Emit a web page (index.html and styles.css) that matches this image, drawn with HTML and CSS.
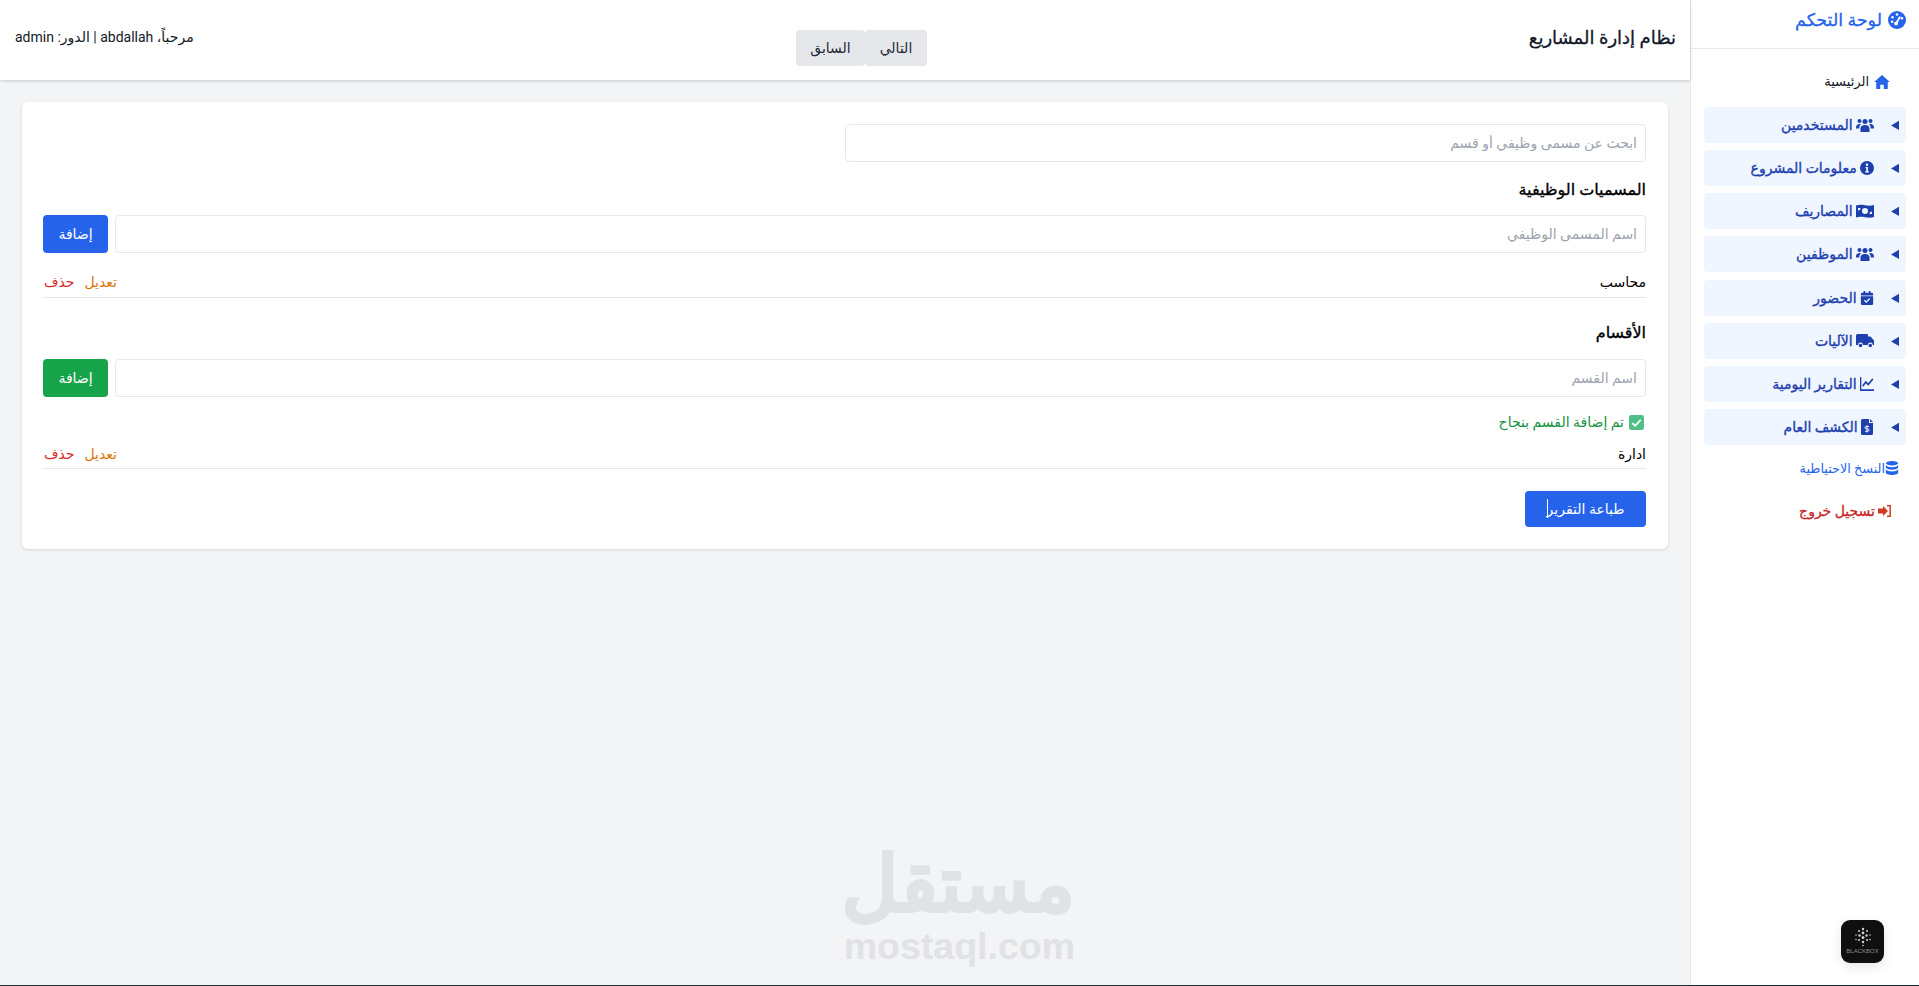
FILE: index.html
```html
<!DOCTYPE html>
<html lang="ar" dir="rtl">

<head>
  <meta charset="UTF-8" />
  <title>نظام إدارة المشاريع</title>
  <link rel="stylesheet" href="styles.css">
</head>

<body>
  <aside class="sidebar">
    <div class="sidebar-title">
      <svg class="title-icon" viewBox="0 0 20 20"><circle cx="10" cy="10" r="10" fill="#2563eb"/><circle cx="10" cy="4" r="1.4" fill="#fff"/><circle cx="5" cy="7" r="1.4" fill="#fff"/><circle cx="4.5" cy="12" r="1.4" fill="#fff"/><circle cx="15.5" cy="8" r="1.4" fill="#fff"/><path d="M9 14l4-7" stroke="#fff" stroke-width="2" stroke-linecap="round"/><circle cx="9" cy="14" r="2.2" fill="#fff"/></svg>
      <span>لوحة التحكم</span>
    </div>
    <nav class="nav">
      <a class="nav-home">
        <svg class="icon" viewBox="0 0 18 16"><path fill="#2563eb" d="M9 0l9 8h-2.4v8H11v-5H7v5H2.400V8H0z"/></svg>
        <span>الرئيسية</span>
      </a>
      <details class="nav-group"><summary><svg class="icon" viewBox="0 0 18 14"><g fill="#1e40af"><circle cx="9" cy="3.500" r="2.500"/><circle cx="3.500" cy="3" r="2"/><circle cx="14.500" cy="3" r="2"/><path d="M4.500 14v-3.500C4.500 8 6.500 7 9 7s4.500 1 4.500 3.500V14z"/><path d="M0 10c0-3 1.500-4 3.500-4 .6 0 1 .1 1.400.3C3.800 7.200 3.300 8.500 3.300 10.500H0zM18 10c0-3-1.500-4-3.500-4-.6 0-1 .1-1.400.3 1.100.9 1.600 2.200 1.600 4.200H18z"/></g></svg> المستخدمين</summary></details>
      <details class="nav-group"><summary><svg class="icon icon-14" viewBox="0 0 14 14"><circle cx="7" cy="7" r="7" fill="#1e40af"/><circle cx="7" cy="3.800" r="1.200" fill="#fff"/><path d="M5.600 6h2.300v4.200h1v1.200H5.200v-1.200h1.100V7.200H5.600z" fill="#fff"/></svg> معلومات المشروع</summary></details>
      <details class="nav-group"><summary><svg class="icon" viewBox="0 0 18 14"><path fill="#1e40af" fill-rule="evenodd" d="M0 1.500c6-2 12 1.500 18-.5v12c-6 2-12-1.500-18 .5zM9 4a3 3 0 100 6 3 3 0 000-6zM2 4v2.500A2.500 2.500 0 004.500 4zM16 10V7.500A2.500 2.500 0 0013.500 10z"/></svg> المصاريف</summary></details>
      <details class="nav-group"><summary><svg class="icon" viewBox="0 0 18 14"><g fill="#1e40af"><circle cx="9" cy="3.500" r="2.500"/><circle cx="3.500" cy="3" r="2"/><circle cx="14.500" cy="3" r="2"/><path d="M4.500 14v-3.500C4.500 8 6.500 7 9 7s4.500 1 4.500 3.500V14z"/><path d="M0 10c0-3 1.500-4 3.500-4 .6 0 1 .1 1.400.3C3.800 7.200 3.300 8.500 3.300 10.500H0zM18 10c0-3-1.500-4-3.500-4-.6 0-1 .1-1.400.3 1.100.9 1.600 2.200 1.600 4.200H18z"/></g></svg> الموظفين</summary></details>
      <details class="nav-group"><summary><svg class="icon icon-14" viewBox="0 0 14 16"><path fill="#1e40af" fill-rule="evenodd" d="M3 0h2v2h4V0h2v2h1.500A1.500 1.500 0 0114 3.500V5H0V3.500A1.500 1.500 0 011.500 2H3zM0 6h14v8.500a1.500 1.500 0 01-1.500 1.500h-11A1.500 1.500 0 010 14.500z"/><path d="M4 10.500l2.200 2.200L10 8.500" fill="none" stroke="#eff6ff" stroke-width="1.500"/></svg> الحضور</summary></details>
      <details class="nav-group"><summary><svg class="icon" viewBox="0 0 18 14"><path fill="#1e40af" d="M1.500 0H11a1 1 0 011 1v1.500h2.500L18 6.500V11h-1.200a2.500 2.500 0 00-5 0H7a2.500 2.500 0 00-5 0H0V1.500A1.500 1.500 0 011.500 0z"/><circle cx="4.500" cy="11.500" r="1.800" fill="#1e40af"/><circle cx="14.300" cy="11.500" r="1.800" fill="#1e40af"/></svg> الآليات</summary></details>
      <details class="nav-group"><summary><svg class="icon icon-14" viewBox="0 0 18 14" preserveAspectRatio="none"><path fill="none" stroke="#1e40af" stroke-width="1.800" d="M.8 0v13.200H18"/><path fill="none" stroke="#1e40af" stroke-width="1.800" d="M3.500 9l4-4 3 2.500L16.500 2"/></svg> التقارير اليومية</summary></details>
      <details class="nav-group"><summary><svg class="icon icon-12" viewBox="0 0 12 16"><path fill="#1e40af" d="M1.500 0H8v4h4v10.500a1.500 1.500 0 01-1.500 1.500h-9A1.500 1.500 0 010 14.500v-13A1.500 1.500 0 011.500 0zM9 0l3 3H9z"/><path d="M8 7.500H5.200a1.200 1.200 0 000 2.400h1.600a1.200 1.200 0 010 2.400H4M6 6.300v7.200" fill="none" stroke="#eff6ff"/></svg> الكشف العام</summary></details>
      <a class="nav-backup">
        <svg class="icon" viewBox="0 0 14 16"><g fill="#2563eb"><ellipse cx="7" cy="2.500" rx="7" ry="2.500"/><path d="M0 4.500C1 6.200 4 7 7 7s6-.8 7-2.500v3C13 9.200 10 10 7 10S1 9.200 0 7.500zM0 9.500C1 11.200 4 12 7 12s6-.8 7-2.500v4C14 15 10.500 16 7 16s-7-1-7-2.500z"/></g></svg>
        <span>النسخ الاحتياطية</span>
      </a>
      <a class="nav-logout">
        <svg class="icon" viewBox="0 0 14 12"><path fill="#d03b20" d="M1 3.500h5V1l5 5-5 5V8.500H1z"/><path fill="none" stroke="#d03b20" stroke-width="1.500" d="M10 .8h3.200v10.400H10"/></svg>
        <span>تسجيل خروج</span>
      </a>
    </nav>
  </aside>

  <div class="main">
    <header class="topbar">
      <h1 class="page-title">نظام إدارة المشاريع</h1>
      <div class="pager">
        <button class="pager-btn">التالي</button>
        <button class="pager-btn">السابق</button>
      </div>
      <div class="welcome">مرحباً، abdallah | الدور: admin</div>
    </header>

    <main class="content">
      <section class="card">
        <input class="field search" type="text" placeholder="ابحث عن مسمى وظيفي أو قسم" />

        <h2 class="section-title section-first">المسميات الوظيفية</h2>
        <div class="add-row">
          <input class="field" type="text" placeholder="اسم المسمى الوظيفي" />
          <button class="btn btn-blue">إضافة</button>
        </div>
        <div class="list-row">
          <span>محاسب</span>
          <span class="actions"><a class="edit">تعديل</a><a class="delete">حذف</a></span>
        </div>

        <h2 class="section-title section-second">الأقسام</h2>
        <div class="add-row">
          <input class="field" type="text" placeholder="اسم القسم" />
          <button class="btn btn-green">إضافة</button>
        </div>
        <div class="success">
          <svg class="check" viewBox="0 0 14 14"><rect width="14" height="14" rx="2" fill="#4fbf85"/><path d="M3 7.500l2.800 2.500L11 4.500" fill="none" stroke="#fff" stroke-width="1.600"/></svg>
          تم إضافة القسم بنجاح
        </div>
        <div class="list-row list-row-tight">
          <span>ادارة</span>
          <span class="actions"><a class="edit">تعديل</a><a class="delete">حذف</a></span>
        </div>

        <button class="btn btn-print">طباعة التقرير<span class="ibeam"></span></button>
      </section>
    </main>
  </div>

  <!-- watermark and badge sit on top of the page -->
  <div class="watermark">
    <div class="wm-ar">مستقل</div>
    <div class="wm-en">mostaql.com</div>
  </div>
  <div class="blackbox">
    <svg class="bb-dots" viewBox="0 0 20 20"><g fill="#c9d3c6"><circle cx="10" cy="2" r="1.200"/><circle cx="6" cy="4" r="1"/><circle cx="14" cy="4" r="1"/><circle cx="10" cy="6" r="1.400"/><circle cx="3" cy="8" r=".8"/><circle cx="6.500" cy="8.500" r="1.200"/><circle cx="13.500" cy="8.500" r="1.200"/><circle cx="17" cy="8" r=".8"/><circle cx="10" cy="10.500" r="1.500"/><circle cx="6" cy="13" r="1"/><circle cx="14" cy="13" r="1"/><circle cx="3" cy="12.500" r=".8"/><circle cx="17" cy="12.500" r=".8"/><circle cx="10" cy="15" r="1.200"/><circle cx="10" cy="18.500" r=".8"/></g></svg>
    <span class="bb-name">BLACKBOX</span>
  </div>
</body>

</html>
```

FILE: styles.css
```css
* {
  box-sizing: border-box;
}

html,
body {
  height: 100%;
}

body {
  margin: 0;
  height: 986px;
  display: flex;
  overflow: hidden;
  background-color: #f3f4f6;
  color: #111827;
  font-family: 'Roboto', 'Noto Sans', 'DejaVu Sans', sans-serif;
  font-size: 14px;
  border-bottom: 1px solid #1f2937;
}

/* sidebar */
.sidebar {
  width: 229px;
  flex-shrink: 0;
  background-color: #fff;
  border-left: 1px solid #e5e7eb;
}

.sidebar-title {
  height: 49px;
  padding: 0 13px 8px;
  display: flex;
  align-items: center;
  gap: 6px;
  color: #2563eb;
  font-size: 17.5px;
  -webkit-text-stroke: 0.3px currentColor;
  border-bottom: 1px solid #e5e7eb;
}

.title-icon {
  width: 18px;
  height: 18px;
}

.nav {
  padding: 14.7px 13px 0 13px;
}

.icon {
  width: 18px;
  height: 14px;
  vertical-align: -2px;
}

.icon-14 {
  width: 14px;
}

.icon-12 {
  width: 12px;
  height: 16px;
  vertical-align: -3px;
}

.nav-home {
  height: 36px;
  padding-right: 15px;
  display: flex;
  align-items: center;
  gap: 4px;
  font-size: 13px;
  font-weight: 500;
}

.nav-group {
  margin-top: 7.2px;
}

.nav-group summary {
  height: 36px;
  padding: 8px 7px;
  line-height: 20px;
  background-color: #eff6ff;
  border-radius: 4px;
  color: #1e40af;
  font-size: 14px;
  -webkit-text-stroke: 0.35px currentColor;
  white-space: nowrap;
}

.nav-group .icon {
  margin-right: 10px;
}

.nav-group .icon-12 {
  margin-right: 11px;
}

.nav-backup {
  height: 36px;
  margin-top: 5px;
  padding-right: 7px;
  display: flex;
  align-items: center;
  gap: 0;
  color: #2563eb;
  font-size: 12.8px;
}

.nav-backup .icon {
  width: 14px;
  height: 14px;
}

.nav-logout {
  height: 36px;
  margin-top: 7px;
  padding-right: 15px;
  display: flex;
  align-items: center;
  gap: 2px;
  color: #c62828;
  -webkit-text-stroke: 0.3px currentColor;
}

.nav-logout .icon {
  width: 14px;
  height: 12px;
}

/* top bar */
.main {
  flex: 1;
  min-width: 0;
}

.topbar {
  height: 80px;
  padding: 0 14px 0 15px;
  display: flex;
  justify-content: space-between;
  align-items: flex-start;
  background-color: #fff;
  box-shadow: 0 1px 3px rgba(0, 0, 0, 0.18);
}

.page-title {
  margin: 24px 0 0;
  font-size: 18px;
  font-weight: 400;
  line-height: 28px;
  -webkit-text-stroke: 0.3px currentColor;
}

.pager {
  margin-top: 30px;
  display: flex;
}

.pager-btn {
  height: 36px;
  padding: 0 14.5px;
  border: none;
  border-radius: 4px;
  background-color: #e5e7eb;
  color: #1f2937;
  font: inherit;
}

.welcome {
  margin-top: 27px;
  line-height: 20px;
}

/* card */
.content {
  padding: 22px 22px 0 22px;
}

.card {
  height: 447px;
  padding: 22px 22px 0 21px;
  background-color: #fff;
  border-radius: 6px;
  box-shadow: 0 1px 3px rgba(0, 0, 0, 0.12);
}

.field {
  flex: 1;
  height: 38px;
  padding: 0 8px;
  border: 1px solid #e5e7eb;
  border-radius: 4px;
  background-color: #fff;
  font: inherit;
  color: #111827;
}

.field::placeholder {
  color: #9ca3af;
}

.search {
  display: block;
  width: 801px;
}

.section-title {
  margin: 16px 0 0;
  font-size: 16px;
  font-weight: 400;
  line-height: 22px;
  color: #000;
  -webkit-text-stroke: 0.35px currentColor;
}

.section-first {
  margin-top: 17px;
  margin-bottom: -1px;
}

.section-second {
  margin-top: 24px;
}

.add-row {
  margin-top: 15px;
  display: flex;
  gap: 7px;
}

.btn {
  height: 38px;
  min-width: 65px;
  padding: 0 15px;
  border: none;
  border-radius: 4px;
  color: #fff;
  font: inherit;
}

.btn-blue {
  background-color: #2563eb;
}

.btn-green {
  background-color: #16a34a;
}

.list-row {
  margin-top: 18px;
  padding-bottom: 4px;
  height: 27px;
  display: flex;
  justify-content: space-between;
  align-items: center;
  border-bottom: 1px solid #e5e7eb;
  color: #000;
}

.list-row-tight {
  margin-top: 10px;
  padding-bottom: 2px;
}

.actions {
  display: flex;
  gap: 10px;
  padding-left: 1px;
}

.edit {
  color: #d97706;
}

.delete {
  color: #dc2626;
}

.success {
  margin-top: 15px;
  height: 20px;
  display: flex;
  align-items: center;
  gap: 5px;
  padding-right: 2px;
  color: #15923f;
  font-size: 14px;
}

.check {
  width: 15px;
  height: 15px;
}

.btn-print {
  position: relative;
  display: block;
  margin-top: 22px;
  width: 121px;
  height: 36px;
  background-color: #2563eb;
}

.ibeam {
  position: absolute;
  left: 22px;
  top: 8px;
  width: 1px;
  height: 19px;
  background-color: #fff;
}

/* overlays */
.watermark {
  position: absolute;
  left: 845px;
  top: 841px;
  width: 230px;
  text-align: center;
  color: #e0e2e5;
  pointer-events: none;
}

.wm-ar {
  height: 83px;
  font-family: 'Liberation Serif', 'DejaVu Sans', sans-serif;
  font-size: 78px;
  line-height: 87px;
  -webkit-text-stroke: 4px currentColor;
  white-space: nowrap;
}

.wm-en {
  font-family: 'Liberation Sans', sans-serif;
  font-size: 37.5px;
  font-weight: 700;
  line-height: 44px;
}

.blackbox {
  position: absolute;
  left: 1841px;
  top: 920px;
  width: 43px;
  height: 43px;
  padding-top: 7px;
  display: flex;
  flex-direction: column;
  align-items: center;
  background-color: #0f0f10;
  border-radius: 9px;
  box-shadow: 0 4px 12px rgba(0, 0, 0, 0.1);
}

.bb-dots {
  width: 20px;
  height: 20px;
}

.bb-name {
  direction: ltr;
  color: #8b8f94;
  font-family: 'Liberation Sans', sans-serif;
  font-size: 6px;
  line-height: 8px;
}
```
